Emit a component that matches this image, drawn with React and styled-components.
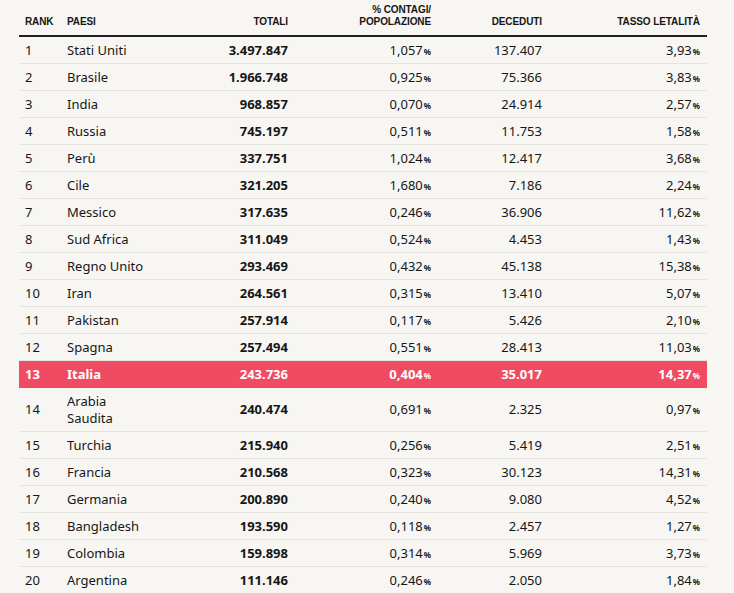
import React from 'react';
import styled, { createGlobalStyle } from 'styled-components';

const GlobalStyle = createGlobalStyle`
    body {
        margin: 0;
        background: #f7f6f3;
        font-family: "Noto Sans", "DejaVu Sans", sans-serif;
        color: #161616;
    }
`

const Wrap = styled.div`
    padding: 0 27px 0 19px;
`

const Table = styled.table`
    width: 688px;
    border-collapse: collapse;
    table-layout: fixed;
`

const Th = styled.th`
    font-family: "Liberation Sans", Arial, sans-serif;
    font-size: 10px;
    font-weight: 700;
    line-height: 12px;
    text-transform: uppercase;
    text-align: ${ props => props.align ? props.align : 'left' };
    vertical-align: bottom;
    height: 28px;
    padding: 0 ${ props => props.pr ? props.pr : '6px' } 7px 6px;
    border-bottom: 2px solid #222;
    letter-spacing: -0.1px;
`

const Row = styled.tr`
    background: ${ props => props.highlight ? '#ef4c63' : 'transparent' };
    color: ${ props => props.highlight ? '#fff' : 'inherit' };
    font-weight: ${ props => props.highlight ? 700 : 400 };
    border-bottom: 1px solid ${ props => props.highlight ? '#ef4c63' : '#e7e5e0' };
`

const Td = styled.td`
    font-size: 13px;
    line-height: ${ props => props.tall ? '16.5px' : '15px' };
    height: 16px;
    padding: 5px ${ props => props.pr ? props.pr : '6px' } 5px 6px;
    text-align: ${ props => props.align ? props.align : 'left' };
    font-weight: ${ props => props.bold ? 700 : 'inherit' };
    vertical-align: middle;
`

const Pct = styled.span`
    font-size: 8px;
    line-height: 1;
    font-weight: 700;
    margin-left: 1px;
`

const data = [
    ['Stati Uniti', '3.497.847', '1,057', '137.407', '3,93'],
    ['Brasile', '1.966.748', '0,925', '75.366', '3,83'],
    ['India', '968.857', '0,070', '24.914', '2,57'],
    ['Russia', '745.197', '0,511', '11.753', '1,58'],
    ['Perù', '337.751', '1,024', '12.417', '3,68'],
    ['Cile', '321.205', '1,680', '7.186', '2,24'],
    ['Messico', '317.635', '0,246', '36.906', '11,62'],
    ['Sud Africa', '311.049', '0,524', '4.453', '1,43'],
    ['Regno Unito', '293.469', '0,432', '45.138', '15,38'],
    ['Iran', '264.561', '0,315', '13.410', '5,07'],
    ['Pakistan', '257.914', '0,117', '5.426', '2,10'],
    ['Spagna', '257.494', '0,551', '28.413', '11,03'],
    ['Italia', '243.736', '0,404', '35.017', '14,37'],
    ['Arabia Saudita', '240.474', '0,691', '2.325', '0,97'],
    ['Turchia', '215.940', '0,256', '5.419', '2,51'],
    ['Francia', '210.568', '0,323', '30.123', '14,31'],
    ['Germania', '200.890', '0,240', '9.080', '4,52'],
    ['Bangladesh', '193.590', '0,118', '2.457', '1,27'],
    ['Colombia', '159.898', '0,314', '5.969', '3,73'],
    ['Argentina', '111.146', '0,246', '2.050', '1,84'],
]

function App() {
    return (
    <Wrap>
        <GlobalStyle />
        <Table>
            <colgroup>
                <col style={{width: '42px'}} />
                <col style={{width: '120px'}} />
                <col style={{width: '113px'}} />
                <col style={{width: '143px'}} />
                <col style={{width: '111px'}} />
                <col style={{width: '159px'}} />
            </colgroup>
            <thead>
                <tr>
                    <Th>Rank</Th>
                    <Th>Paesi</Th>
                    <Th align='right'>Totali</Th>
                    <Th align='right'>% contagi/<br />popolazione</Th>
                    <Th align='right'>Deceduti</Th>
                    <Th align='right' pr='7px'>Tasso letalità</Th>
                </tr>
            </thead>
            <tbody>
                {
                    data.map((d, i) => (
                        <Row key={d[0]} highlight={d[0] === 'Italia'}>
                            <Td>{i + 1}</Td>
                            {
                                d[0] === 'Arabia Saudita'
                                    ? <Td tall>Arabia<br />Saudita</Td>
                                    : <Td>{d[0]}</Td>
                            }
                            <Td align='right' bold>{d[1]}</Td>
                            <Td align='right'>{d[2]}<Pct>%</Pct></Td>
                            <Td align='right'>{d[3]}</Td>
                            <Td align='right' pr='7px'>{d[4]}<Pct>%</Pct></Td>
                        </Row>
                    ))
                }
            </tbody>
        </Table>
    </Wrap>
    )
}

export default App;
